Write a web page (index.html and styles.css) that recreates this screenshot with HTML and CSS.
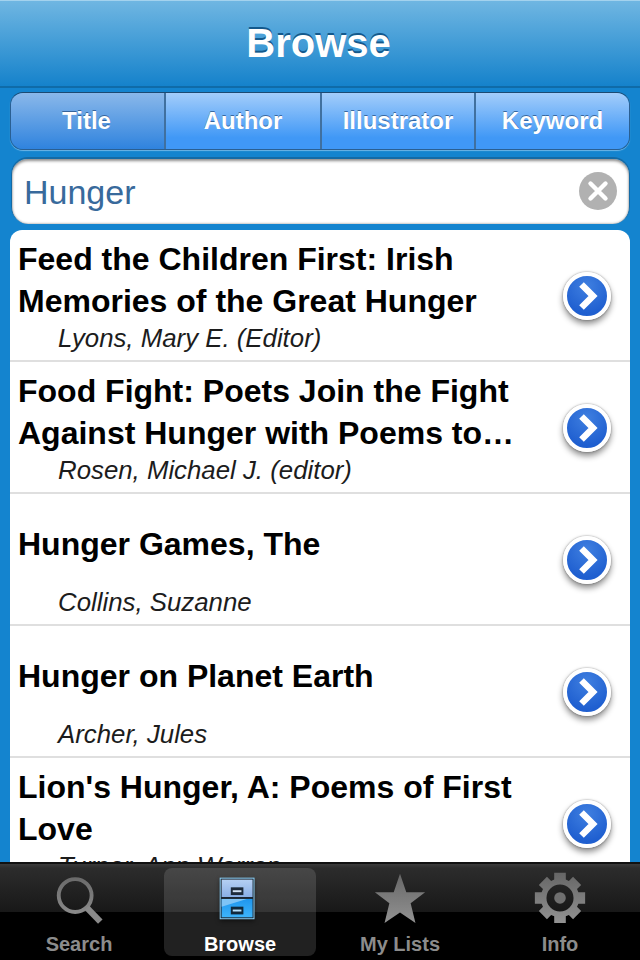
FILE: index.html
```html
<!DOCTYPE html>
<html lang="en">
<head>
    <meta charset="UTF-8">
    <meta name="viewport" content="width=device-width, initial-scale=1.0">
    <title>Browse</title>
    <link rel="stylesheet" href="styles.css">
</head>
<body>
<div class="screen">
    <header class="top-bar"><h1>Browse</h1></header>

    <div class="segments">
        <div class="segment active">Title</div>
        <div class="segment seg-author">Author</div>
        <div class="segment seg-illus">Illustrator</div>
        <div class="segment seg-key">Keyword</div>
    </div>

    <div class="search-box">
        <span class="search-text">Hunger</span>
        <svg class="clear-icon" width="38" height="38" viewBox="0 0 38 38">
            <circle cx="19" cy="19" r="19" fill="#b1b1b1"/>
            <path d="M11.5 11.5L26.5 26.5M26.5 11.5L11.5 26.5" stroke="#fff" stroke-width="4.4" stroke-linecap="round"/>
        </svg>
    </div>

    <div class="results">
        <div class="row">
            <div class="row-text">
                <div class="book-title">Feed the Children First: Irish Memories of the Great Hunger</div>
                <div class="book-author">Lyons, Mary E. (Editor)</div>
            </div>
            <div class="go-btn"><svg width="40" height="40" viewBox="0 0 40 40"><path d="M14.5 8.5L26 20L14.5 31.5" fill="none" stroke="#fff" stroke-width="6.5"/></svg></div>
        </div>
        <div class="row">
            <div class="row-text">
                <div class="book-title">Food Fight: Poets Join the Fight Against Hunger with Poems to…</div>
                <div class="book-author">Rosen, Michael J. (editor)</div>
            </div>
            <div class="go-btn"><svg width="40" height="40" viewBox="0 0 40 40"><path d="M14.5 8.5L26 20L14.5 31.5" fill="none" stroke="#fff" stroke-width="6.5"/></svg></div>
        </div>
        <div class="row">
            <div class="row-text">
                <div class="book-title">Hunger Games, The</div>
                <div class="book-author">Collins, Suzanne</div>
            </div>
            <div class="go-btn"><svg width="40" height="40" viewBox="0 0 40 40"><path d="M14.5 8.5L26 20L14.5 31.5" fill="none" stroke="#fff" stroke-width="6.5"/></svg></div>
        </div>
        <div class="row">
            <div class="row-text">
                <div class="book-title">Hunger on Planet Earth</div>
                <div class="book-author">Archer, Jules</div>
            </div>
            <div class="go-btn"><svg width="40" height="40" viewBox="0 0 40 40"><path d="M14.5 8.5L26 20L14.5 31.5" fill="none" stroke="#fff" stroke-width="6.5"/></svg></div>
        </div>
        <div class="row">
            <div class="row-text">
                <div class="book-title">Lion's Hunger, A: Poems of First Love</div>
                <div class="book-author">Turner, Ann Warren</div>
            </div>
            <div class="go-btn"><svg width="40" height="40" viewBox="0 0 40 40"><path d="M14.5 8.5L26 20L14.5 31.5" fill="none" stroke="#fff" stroke-width="6.5"/></svg></div>
        </div>
    </div>

    <nav class="tab-bar">
        <div class="tab">
            <svg width="60" height="60" viewBox="0 0 60 60">
                <defs>
                    <linearGradient id="grayGrad" gradientUnits="userSpaceOnUse" x1="0" y1="5" x2="0" y2="58">
                        <stop offset="0" stop-color="#666"/>
                        <stop offset="1" stop-color="#939393"/>
                    </linearGradient>
                </defs>
                <circle cx="25" cy="28.5" r="17" fill="none" stroke="url(#grayGrad)" stroke-width="4"/>
                <path d="M37 41L51 55.5" stroke="#8a8a8a" stroke-width="6.5"/>
            </svg>
            <span>Search</span>
        </div>
        <div class="tab selected">
            <svg class="cabinet" width="60" height="60" viewBox="0 0 60 60">
                <defs>
                    <linearGradient id="drawerTop" x1="0" y1="0" x2="0" y2="1">
                        <stop offset="0" stop-color="#b5d0f3"/>
                        <stop offset="1" stop-color="#89afe6"/>
                    </linearGradient>
                    <linearGradient id="drawerLow" x1="0" y1="0" x2="0" y2="1">
                        <stop offset="0" stop-color="#1f96ee"/>
                        <stop offset="1" stop-color="#3db4fb"/>
                    </linearGradient>
                </defs>
                <rect x="9.5" y="10.5" width="35" height="42" fill="#1c2630" stroke="#8fd4fb"/>
                <rect x="11" y="12" width="32" height="18" fill="url(#drawerTop)"/>
                <rect x="11" y="32" width="32" height="19" fill="url(#drawerLow)"/>
                <path d="M11 32H37L11 40Z" fill="#7ec4f6"/>
                <rect x="20.5" y="20" width="13" height="8" fill="#1c2a3a"/>
                <rect x="22.5" y="23" width="9" height="2" fill="#cfe0f2"/>
                <rect x="20.5" y="40" width="13" height="8" fill="#10293c"/>
                <rect x="22.5" y="43" width="9" height="2" fill="#b8e0fa"/>
            </svg>
            <span>Browse</span>
        </div>
        <div class="tab">
            <svg width="60" height="60" viewBox="0 0 60 60">
                <path d="M30 6L36.5 25H56L41 36.5L46 57L30 46L14 57L19 36.5L4 25H23.5Z" fill="url(#grayGrad)"/>
            </svg>
            <span>My Lists</span>
        </div>
        <div class="tab">
            <svg width="60" height="60" viewBox="0 0 60 60">
                <path fill-rule="evenodd" fill="url(#grayGrad)" d="M24 5H36V12L39.2 13.4L43.5 9.1L51.9 17.5L47.6 21.8L49 25H56V37H49L47.6 40.2L51.9 44.5L43.5 52.9L39.2 48.6L36 50V57H24V50L20.8 48.6L16.5 52.9L8.1 44.5L12.4 40.2L11 37H4V25H11L12.4 21.8L8.1 17.5L16.5 9.1L20.8 13.4L24 12ZM30 17A14 14 0 1 0 30 45A14 14 0 1 0 30 17Z"/>
                <circle cx="30" cy="31" r="6" fill="#707070"/>
            </svg>
            <span>Info</span>
        </div>
    </nav>
</div>
</body>
</html>
```

FILE: styles.css
```css
* {
    box-sizing: border-box;
}
html, body {
    margin: 0;
    padding: 0;
}
body {
    font-family: "Liberation Sans", Arial, sans-serif;
}
.screen {
    width: 640px;
    height: 960px;
    background: #1484cf;
    display: flex;
    flex-direction: column;
    overflow: hidden;
}
.top-bar {
    height: 88px;
    flex: none;
    background: linear-gradient(#6fb6e2, #1582cb);
    border-top: 1px solid #a3d2ee;
    border-bottom: 2px solid #0f6ba8;
    display: flex;
    align-items: center;
    justify-content: center;
    padding-right: 3px;
}
.top-bar h1 {
    margin: 0;
    color: #fff;
    font-size: 40px;
    font-weight: bold;
    text-shadow: 0 -2px 0 #14598c;
}
.segments {
    flex: none;
    height: 58px;
    margin: 4px 10px 0;
    display: flex;
    border: 1px solid #2a5f92;
    border-top-color: #1d4a72;
    border-radius: 13px;
    box-shadow: 0 1px 1px rgba(170, 215, 245, 0.6);
    overflow: hidden;
}
.segment {
    display: flex;
    align-items: center;
    justify-content: center;
    color: #fff;
    font-size: 24px;
    font-weight: bold;
    text-shadow: 0 -1px 0 rgba(30, 70, 120, 0.7);
    background: linear-gradient(#a3cdfb, #4098f6 80%);
    border-left: 2px solid #40709f;
}
.segment.active {
    width: 153px;
    padding-right: 2px;
    background: linear-gradient(#8ab8ea, #2f83de);
    border-left: none;
}
.seg-author { width: 156px; }
.seg-illus { width: 154px; }
.seg-key { flex: 1; }
.search-box {
    flex: none;
    height: 67px;
    margin: 7px 10px 0 11px;
    padding: 0 12px 0 12px;
    display: flex;
    align-items: center;
    justify-content: space-between;
    background: #fff;
    border-radius: 17px;
    border: 1px solid #146aa5;
    border-width: 2px 1px 0;
    box-shadow: inset 0 2px 3px rgba(0, 0, 0, 0.45), inset 0 -1px 2px rgba(0, 0, 0, 0.2);
}
.search-text {
    color: #386a9c;
    font-size: 34px;
    margin-top: 2px;
}
.clear-icon {
    flex: none;
    margin-top: -1px;
}
.results {
    flex: 1;
    min-height: 0;
    margin: 6px 10px 0;
    background: #fff;
    border-radius: 12px 12px 0 0;
    overflow: hidden;
}
.row {
    height: 132px;
    display: flex;
    align-items: center;
    justify-content: space-between;
    padding: 0 19px 0 8px;
    border-bottom: 2px solid #dfdfdf;
}
.row-text {
    width: 510px;
    align-self: flex-start;
    padding-top: 8px;
}
.book-title {
    height: 84px;
    display: flex;
    align-items: center;
    color: #000;
    font-size: 32px;
    line-height: 42px;
    font-weight: bold;
}
.book-author {
    margin-left: 40px;
    color: #1c1c1c;
    font-size: 25.8px;
    line-height: 32px;
    font-style: italic;
}
.go-btn {
    flex: none;
    width: 48px;
    height: 48px;
    margin-top: 2px;
    border-radius: 50%;
    border: 4px solid #fff;
    background: radial-gradient(circle at 50% 25%, #3f7fe0, #1f5fd0 75%);
    box-shadow: 0 0 2px rgba(0, 0, 0, 0.45), 0 4px 6px rgba(0, 0, 0, 0.45);
}
.go-btn svg {
    display: block;
}
.tab-bar {
    flex: none;
    height: 98px;
    display: flex;
    border-top: 2px solid #111;
    background: linear-gradient(#3a3a3a 0, #2c2c2c 4px, #181818 48px, #000 48px);
    padding: 4px 0;
}
.tab {
    width: 160px;
    display: flex;
    flex-direction: column;
    align-items: center;
    color: #8c8c8c;
    font-size: 20px;
    font-weight: bold;
    line-height: 24px;
    border-radius: 8px;
}
.tab svg {
    display: block;
    margin-bottom: 6px;
}
.tab:first-child span {
    margin-right: 2px;
}
.tab.selected {
    width: 152px;
    margin: 0 4px;
    color: #fff;
    background: rgba(255, 255, 255, 0.13);
}
.cabinet {
    filter: drop-shadow(0 2px 2px rgba(0, 0, 0, 0.5));
}
```
